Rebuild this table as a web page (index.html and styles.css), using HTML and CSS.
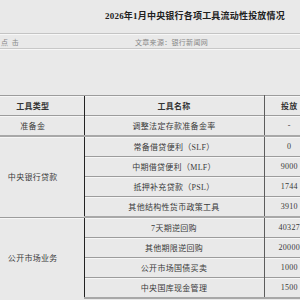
FILE: index.html
```html
<!DOCTYPE html>
<html lang="zh">
<head>
<meta charset="utf-8">
<link rel="stylesheet" href="styles.css">
</head>
<body>
<div class="page">
  <div class="title-bar"><h1 class="title">2026年1月中央银行各项工具流动性投放情况</h1></div>
  <div class="meta">
    <span class="hits">点 击</span>
    <span class="source">文章来源：银行新闻网</span>
  </div>
  <table class="data">
    <colgroup><col class="c1"><col class="c2"><col class="c3"></colgroup>
    <tr class="head"><th>工具类型</th><th class="mid">工具名称</th><th>投放</th></tr>
    <tr class="grp-end"><td>准备金</td><td class="mid">调整法定存款准备金率</td><td>-</td></tr>
    <tr><td rowspan="4" class="grp">中央银行贷款</td><td class="mid">常备借贷便利（SLF）</td><td>0</td></tr>
    <tr><td class="mid">中期借贷便利（MLF）</td><td>9000</td></tr>
    <tr><td class="mid">抵押补充贷款（PSL）</td><td>1744</td></tr>
    <tr class="grp-end"><td class="mid">其他结构性货币政策工具</td><td>3910</td></tr>
    <tr><td rowspan="4" class="grp">公开市场业务</td><td class="mid">7天期逆回购</td><td>40327</td></tr>
    <tr><td class="mid">其他期限逆回购</td><td>20000</td></tr>
    <tr><td class="mid">公开市场国债买卖</td><td>1000</td></tr>
    <tr class="grp-end"><td class="mid">中央国库现金管理</td><td>1500</td></tr>
  </table>
</div>
</body>
</html>
```

FILE: styles.css
```css
html, body {
  margin: 0;
  padding: 0;
  background: #e9e9e9;
  overflow: hidden;
}
.page {
  width: 300px;
  height: 300px;
  overflow: hidden;
  font-family: "Liberation Serif", "Noto Sans CJK SC", serif;
  color: #3a3a3a;
}
.title-bar {
  width: 390px;
  height: 33px;
  border-bottom: 1px solid #c4c4c4;
  box-shadow: 0 1px 0 #f7f7f7;
  display: flex;
  align-items: center;
  justify-content: center;
}
.title {
  margin: 0;
  padding-bottom: 2px;
  font-size: 9px;
  font-weight: bold;
  color: #222;
  letter-spacing: 0.2px;
}
.meta {
  height: 13px;
  margin-top: 1px;
  border-bottom: 1px solid #c8c8c8;
  box-shadow: 0 1px 0 #f7f7f7;
  display: flex;
  align-items: center;
  font-size: 7px;
  color: #888;
}
.hits {
  margin-left: 1px;
  width: 134px;
  letter-spacing: 1px;
}
.source {
  letter-spacing: 0.3px;
}
.data {
  margin-top: 46px;
  margin-left: -18px;
  width: 332px;
  border-collapse: collapse;
  table-layout: fixed;
  font-size: 8px;
  letter-spacing: 0.3px;
}
.c1 { width: 102px; }
.c2 { width: 180px; }
.c3 { width: 50px; }
.data th, .data td {
  height: 19px;
  padding: 0;
  text-align: center;
  border-top: 1px solid #9c9c9c;
  box-shadow: inset 0 1px 0 #f6f6f6;
  vertical-align: middle;
  white-space: nowrap;
}
.data th {
  font-weight: bold;
  color: #333;
}
.data .mid {
  border-left: 1px solid #222;
  border-right: 1px solid #5c5c5c;
}
.grp-end td {
  border-bottom: 2px solid #a8a8a8;
}
```
